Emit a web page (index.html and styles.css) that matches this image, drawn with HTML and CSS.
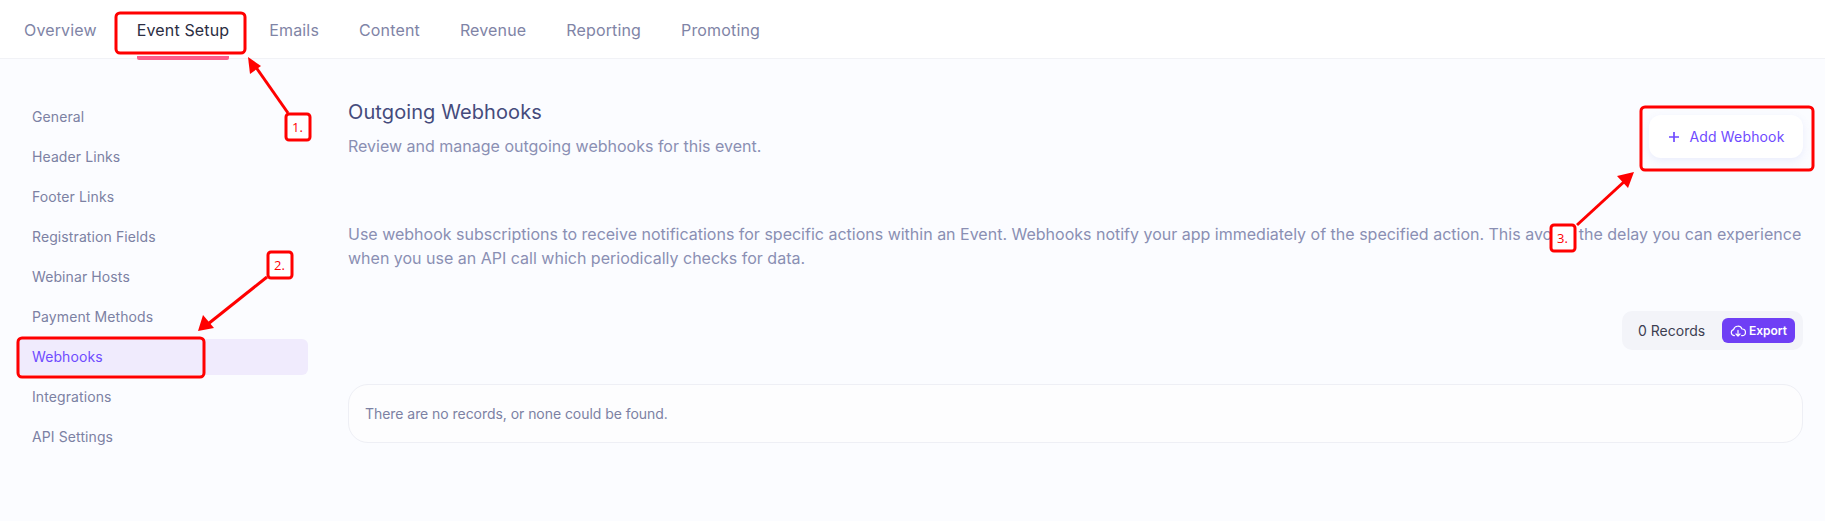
FILE: index.html
```html
<!DOCTYPE html>
<html lang="en">
<head>
    <meta charset="UTF-8">
    <meta name="viewport" content="width=device-width, initial-scale=1.0">
    <title>Outgoing Webhooks</title>
    <link rel="stylesheet" href="styles.css">
</head>
<body>
    <nav class="tabs">
        <a class="tab">Overview</a>
        <a class="tab active">Event Setup</a>
        <a class="tab">Emails</a>
        <a class="tab">Content</a>
        <a class="tab">Revenue</a>
        <a class="tab">Reporting</a>
        <a class="tab">Promoting</a>
    </nav>

    <div class="page">
        <aside class="side">
            <a class="side-link">General</a>
            <a class="side-link">Header Links</a>
            <a class="side-link">Footer Links</a>
            <a class="side-link">Registration Fields</a>
            <a class="side-link">Webinar Hosts</a>
            <a class="side-link">Payment Methods</a>
            <a class="side-link active">Webhooks</a>
            <a class="side-link">Integrations</a>
            <a class="side-link">API Settings</a>
        </aside>

        <main class="main">
            <div class="head">
                <div>
                    <h1 class="title">Outgoing Webhooks</h1>
                    <p class="sub">Review and manage outgoing webhooks for this event.</p>
                </div>
                <button class="add-btn">
                    <svg width="12" height="12" viewBox="0 0 12 12"><path d="M6 1v10M1 6h10" stroke="#6f4bff" stroke-width="1.7" fill="none"/></svg>
                    Add Webhook
                </button>
            </div>
            <p class="intro">Use webhook subscriptions to receive notifications for specific actions within an Event. Webhooks notify your app immediately of the specified action. This avoids the delay you can experience when you use an API call which periodically checks for data.</p>
            <div class="records-row">
                <div class="records">
                    <span>0 Records</span>
                    <button class="export">
                        <svg width="16" height="16" viewBox="0 0 16 16" fill="none" stroke="#fff" stroke-width="1.2" stroke-linecap="round" stroke-linejoin="round"><path d="M4.4 12.6H4A3 3 0 0 1 3.6 6.7 4.4 4.4 0 0 1 12 6a3.3 3.3 0 0 1 .3 6.6h-.7"/><path d="M8 7.4v5.4M6 11l2 2 2-2"/></svg>
                        Export
                    </button>
                </div>
            </div>
            <div class="empty">There are no records, or none could be found.</div>
        </main>
    </div>

    <!-- red annotations on top of the screenshot -->
    <svg class="marks" width="1825" height="521" viewBox="0 0 1825 521">
        <g fill="none" stroke="#f00" stroke-width="3">
            <rect x="116" y="13" width="129" height="40" rx="4"/>
            <rect x="18" y="338" width="186" height="39" rx="4"/>
            <rect x="1641" y="107" width="172" height="63" rx="4"/>
            <path d="M288 113 253 63"/>
            <path d="M267 277 208 324"/>
            <path d="M1577 225 1626 180"/>
        </g>
        <g fill="#f00">
            <path d="M248 57 261 66 250 74Z"/>
            <path d="M198 331 203 315 214 328Z"/>
            <path d="M1634 172 1628 188 1617 176Z"/>
        </g>
        <g fill="#fff" stroke="#f00" stroke-width="3">
            <rect x="286" y="114" width="24" height="26" rx="3"/>
            <rect x="268" y="252" width="24" height="26" rx="3"/>
            <rect x="1551" y="225" width="24" height="26" rx="3"/>
        </g>
        <g class="mark-num">
            <text x="292" y="132">1.</text>
            <text x="274" y="270">2.</text>
            <text x="1557" y="243">3.</text>
        </g>
    </svg>
</body>
</html>
```

FILE: styles.css
```css
*{
    margin: 0;
    padding: 0;
    box-sizing: border-box;
}
body
{
    width: 1825px;
    height: 521px;
    overflow: hidden;
    position: relative;
    background-color: #fbfcff;
    font-family: Inter, "Liberation Sans", sans-serif;
    color: #8a8fb3;
}
.tabs
{
    height: 59px;
    display: flex;
    padding-left: 24px;
    gap: 40px;
    background-color: #fff;
    border-bottom: 1px solid #f1f2f6;
}
.tab
{
    height: 60px;
    line-height: 61px;
    font-size: 16px;
    font-weight: 400;
    letter-spacing: 0.15px;
    color: #7f84a6;
}
.tab.active
{
    color: #2b2d42;
    border-bottom: 4px solid #ff5c8a;
    border-radius: 0 0 2px 2px;
}
.page
{
    display: flex;
    padding-top: 39px;
}
.side
{
    width: 308px;
    padding: 1px 0 0 16px;
    display: flex;
    flex-direction: column;
    gap: 4px;
}
.side-link
{
    height: 36px;
    line-height: 36px;
    padding-left: 16px;
    font-size: 14px;
    font-weight: 400;
    letter-spacing: 0.1px;
    color: #7c81a3;
    border-radius: 6px;
}
.side-link.active
{
    color: #6f4bff;
    background-color: #f0ebfd;
}
.main
{
    width: 1455px;
    margin-left: 40px;
}
.head
{
    display: flex;
    justify-content: space-between;
    align-items: flex-start;
    height: 110px;
}
.title
{
    font-size: 20px;
    font-weight: 400;
    letter-spacing: 0.1px;
    line-height: 28px;
    color: #454b7c;
}
.sub
{
    font-size: 16px;
    line-height: 24px;
    margin-top: 8px;
}
.add-btn
{
    width: 154px;
    height: 43px;
    margin-top: 17px;
    border: 0;
    border-radius: 12px;
    background-color: #fff;
    box-shadow: 0 3px 8px rgba(90, 110, 230, 0.1);
    color: #6f4bff;
    font: 400 14px Inter, "Liberation Sans", sans-serif;
    letter-spacing: 0.15px;
    display: flex;
    align-items: center;
    justify-content: center;
    gap: 10px;
}
.intro
{
    font-size: 16px;
    line-height: 24px;
    margin-top: 14px;
}
.records-row
{
    display: flex;
    justify-content: flex-end;
    margin-top: 41px;
}
.records
{
    width: 181px;
    height: 39px;
    border-radius: 10px;
    background-color: #f3f4f9;
    display: flex;
    align-items: center;
    justify-content: space-between;
    padding: 0 8px 0 16px;
    font-size: 14px;
    color: #3d3f52;
}
.export
{
    width: 73px;
    height: 25px;
    border: 0;
    border-radius: 6px;
    background-color: #6f3ff5;
    color: #fff;
    font: 600 12px Inter, "Liberation Sans", sans-serif;
    display: flex;
    align-items: center;
    justify-content: center;
    gap: 3px;
}
.empty
{
    height: 59px;
    margin-top: 34px;
    padding-left: 16px;
    line-height: 57px;
    font-size: 14px;
    letter-spacing: -0.05px;
    color: #7c81a3;
    background-color: #fdfdfe;
    border: 1px solid #eeeff5;
    border-radius: 20px;
}
.marks
{
    position: absolute;
    left: 0;
    top: 0;
}
.mark-num
{
    font: 13px "Open Sans", sans-serif;
    fill: #f00;
}
```
